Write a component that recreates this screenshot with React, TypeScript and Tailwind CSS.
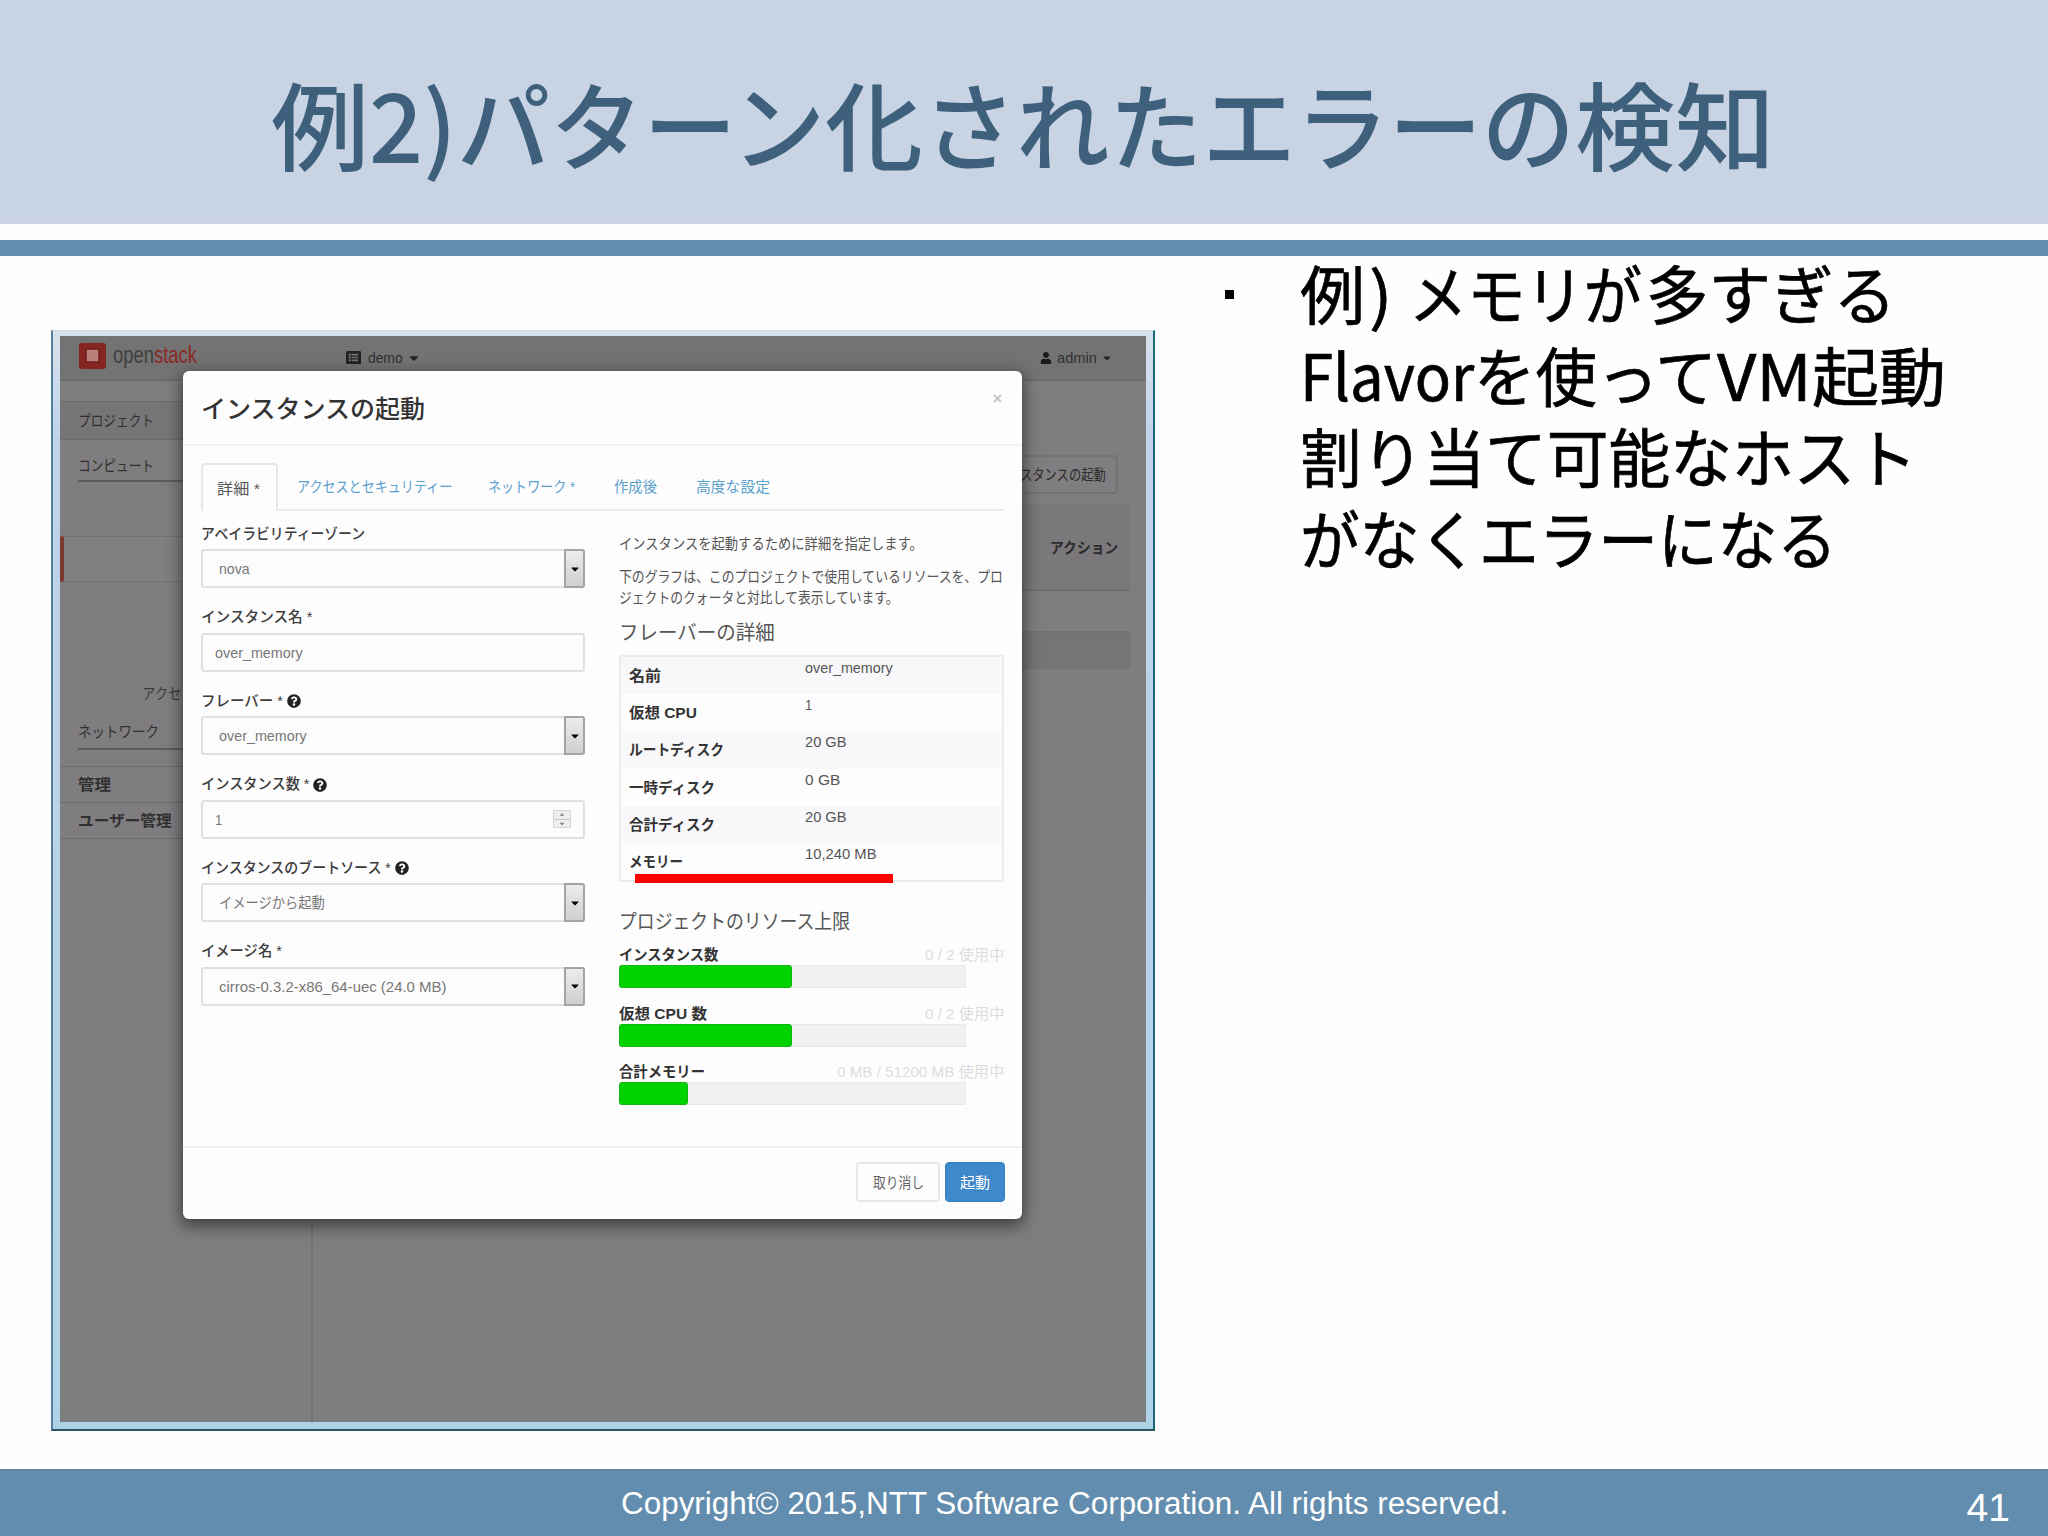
import React, { useLayoutEffect, useRef, useState } from "react";
import { FaCaretDown, FaListAlt, FaQuestionCircle, FaUser } from "react-icons/fa";

type FitProps = {
  w: number;
  className?: string;
  children: React.ReactNode;
};

// Single line of text condensed or stretched to a given width.
function Fit({ w, className = "", children }: FitProps) {
  const ref = useRef<HTMLSpanElement>(null);
  const [scale, setScale] = useState(1);

  useLayoutEffect(() => {
    if (ref.current) setScale(w / ref.current.offsetWidth);
  }, [w]);

  return (
    <span className={`block shrink-0 ${className}`} style={{ width: w }}>
      <span
        ref={ref}
        className="inline-block origin-left whitespace-nowrap"
        style={{ transform: `scaleX(${scale})` }}
      >
        {children}
      </span>
    </span>
  );
}

const fields = [
  { label: "アベイラビリティーゾーン", lw: 164, value: "nova", vw: 31, type: "select" },
  { label: "インスタンス名 *", lw: 111, value: "over_memory", vw: 88, type: "text" },
  { label: "フレーバー *", lw: 82, value: "over_memory", vw: 88, type: "select", help: true },
  { label: "インスタンス数 *", lw: 108, value: "1", vw: 7, type: "number", help: true },
  { label: "インスタンスのブートソース *", lw: 190, value: "イメージから起動", vw: 106, type: "select", help: true },
  { label: "イメージ名 *", lw: 81, value: "cirros-0.3.2-x86_64-uec (24.0 MB)", vw: 227, type: "select" },
];

const flavor = [
  { name: "名前", nw: 32, value: "over_memory", vw: 88 },
  { name: "仮想 CPU", nw: 68, value: "1", vw: 7 },
  { name: "ルートディスク", nw: 95, value: "20 GB", vw: 42 },
  { name: "一時ディスク", nw: 86, value: "0 GB", vw: 35 },
  { name: "合計ディスク", nw: 86, value: "20 GB", vw: 42 },
  { name: "メモリー", nw: 54, value: "10,240 MB", vw: 72 },
];

const quotas = [
  { name: "インスタンス数", nw: 99, used: "0 / 2 使用中", uw: 79, fill: 173 },
  { name: "仮想 CPU 数", nw: 88, used: "0 / 2 使用中", uw: 79, fill: 173 },
  { name: "合計メモリー", nw: 86, used: "0 MB / 51200 MB 使用中", uw: 167, fill: 69 },
];

function Field({ field }: { field: (typeof fields)[number] }) {
  const { label, lw, value, vw, type, help } = field;
  return (
    <div className="h-[83.6px]">
      <div className="flex h-8 items-center gap-1 text-[15px] font-medium text-[#3c3c3c]">
        <Fit w={lw}>{label}</Fit>
        {help && <FaQuestionCircle className="mt-0.5 size-3.5 text-[#222]" />}
      </div>
      <div
        className={`flex h-[39px] items-center justify-between rounded-[3px] border-2 border-[#e0dfe1] bg-[#fdfcfd] text-[15px] text-[#777] ${
          type === "select" ? "pl-4" : "pl-3"
        }`}
      >
        <Fit w={vw}>{value}</Fit>
        {type === "select" && (
          <div className="-my-0.5 -mr-0.5 flex h-[39px] w-[21px] items-center justify-center rounded-r-[3px] border-2 border-[#a5a3a5] bg-linear-to-b from-[#ececec] to-[#cfcfcf]">
            <FaCaretDown className="h-3 w-2.5 text-black" />
          </div>
        )}
        {type === "number" && (
          <div className="mr-3 flex h-[18px] w-[18px] flex-col items-center justify-center border border-[#d5d5d5] bg-[#eee] text-[#888]">
            <FaCaretDown className="size-2 rotate-180" />
            <div className="h-px w-full bg-[#c4c4c4]" />
            <FaCaretDown className="size-2" />
          </div>
        )}
      </div>
    </div>
  );
}

function FlavorPanel() {
  return (
    <div className="w-[385px] pt-[23px] text-[#555]">
      <Fit w={304} className="h-5 text-[15px] leading-5">
        インスタンスを起動するために詳細を指定します。
      </Fit>
      <Fit w={384} className="mt-3 h-[21px] text-[15px] leading-[21px]">
        下のグラフは、このプロジェクトで使用しているリソースを、プロ
      </Fit>
      <Fit w={280} className="h-[21px] text-[15px] leading-[21px]">
        ジェクトのクォータと対比して表示しています。
      </Fit>
      <Fit w={156} className="mt-[11px] h-7 text-xl leading-7">
        フレーバーの詳細
      </Fit>

      <div className="mt-2 h-[227px] border-2 border-[#ececee]">
        {flavor.map((row) => (
          <div key={row.name} className="flex h-[37.2px] pl-2 text-[15px] leading-5 odd:bg-[#f8f8fa]">
            <div className="w-44 pt-[9px] font-bold text-[#333]">
              <Fit w={row.nw}>{row.name}</Fit>
            </div>
            <Fit w={row.vw} className="pt-px">
              {row.value}
            </Fit>
          </div>
        ))}
      </div>

      <Fit w={231} className="mt-[26px] h-7 text-xl leading-7">
        プロジェクトのリソース上限
      </Fit>
      <div className="mt-2">
        {quotas.map((q) => (
          <div key={q.name} className="h-[58.5px]">
            <div className="flex h-[21px] justify-between text-[15px] leading-[21px]">
              <Fit w={q.nw} className="font-bold text-[#333]">
                {q.name}
              </Fit>
              <Fit w={q.uw} className="text-[#dcdcde]">
                {q.used}
              </Fit>
            </div>
            <div className="h-[23px] w-[347px] border border-[#e8e8ea] bg-[#f1f0f2]">
              <div
                className="-mt-px -ml-px h-[23px] rounded-[3px] border border-[#12b512] bg-[#00d200]"
                style={{ width: q.fill }}
              />
            </div>
          </div>
        ))}
      </div>
    </div>
  );
}

function LaunchDialog() {
  return (
    <div className="absolute top-[35px] left-[123px] flex h-[848px] w-[839px] flex-col rounded-md bg-[#fefdfe] shadow-[0_5px_16px_2px_rgba(0,0,0,0.5)]">
      <div className="flex h-[75px] items-start justify-between border-b-2 border-[#f3f1f4] pt-6 pr-5 pl-[18px]">
        <Fit w={224} className="text-[25px] leading-7 font-medium text-[#333]">
          インスタンスの起動
        </Fit>
        <span className="text-base leading-2 font-bold text-[#c4c4c4]">×</span>
      </div>

      <div className="px-[18px] pt-[17px]">
        <div className="flex h-[48px] items-center border-b-2 border-[#ececef] text-[15px] text-[#5ba0cd]">
          <div className="-mb-0.5 flex h-[48px] w-[77px] shrink-0 items-center rounded-t border-2 border-b-0 border-[#e7e6ea] bg-[#fefdfe] pl-3.5 text-[#555]">
            <Fit w={43}>詳細 *</Fit>
          </div>
          <Fit w={155} className="ml-[19px]">アクセスとセキュリティー</Fit>
          <Fit w={87} className="ml-9">ネットワーク *</Fit>
          <Fit w={43} className="ml-[39px]">作成後</Fit>
          <Fit w={74} className="ml-[39px]">高度な設定</Fit>
        </div>

        <div className="flex h-[635px] justify-between">
          <div className="w-[384px] pt-1.5">
            {fields.map((field) => (
              <Field key={field.label} field={field} />
            ))}
          </div>
          <FlavorPanel />
        </div>
      </div>

      <div className="flex h-[73px] justify-end gap-[5px] border-t-2 border-[#f0eef2] pt-3.5 pr-[17px] text-[15px]">
        <button className="flex h-10 w-[84px] items-center justify-center rounded border-2 border-[#e6e5e8] text-[#666]">
          <Fit w={51}>取り消し</Fit>
        </button>
        <button className="flex h-10 w-[60px] items-center justify-center rounded border border-[#357ebd] bg-[#3f88c9] text-white">
          <Fit w={30}>起動</Fit>
        </button>
      </div>
    </div>
  );
}

function Sidebar() {
  return (
    <div className="w-[253px] border-r-2 border-[#737173] text-[15px] text-[#303030]">
      <div className="mt-5 flex h-[39px] items-center border-y border-[#6c6a6c] bg-[#777577] pl-[18px]">
        <Fit w={76}>プロジェクト</Fit>
      </div>
      <div className="ml-[18px] flex h-[42px] items-center border-b-2 border-[#5d5b5d] pt-2.5">
        <Fit w={76}>コンピュート</Fit>
      </div>
      <div className="mt-[54px] h-[46px] border-y border-l-4 border-y-[#747274] border-l-[#7a3a32] bg-[#817f81]" />
      <div className="mt-[102px] h-5 pl-[82px] leading-5 text-[#3c3c3c]">
        <Fit w={39}>アクセ</Fit>
      </div>
      <div className="mt-2.5 ml-[18px] flex h-9 items-center border-b-2 border-[#5d5b5d]">
        <Fit w={81}>ネットワーク</Fit>
      </div>
      <div className="mt-4 flex h-[37px] items-center border-y border-[#6c6a6c] pl-[18px] font-bold">
        <Fit w={33}>管理</Fit>
      </div>
      <div className="flex h-9 items-center border-b border-[#6c6a6c] pl-[18px] font-bold">
        <Fit w={94}>ユーザー管理</Fit>
      </div>
    </div>
  );
}

function Dashboard() {
  return (
    <div className="relative flex h-[1086px] w-[1086px] flex-col bg-[#7f7d7f] leading-none">
      <div className="flex h-[45px] items-center border-b-2 border-[#6c6c6c] bg-[#727372] pr-[33px] pb-1 pl-[19px] text-[#303030]">
        <svg width="27" height="26" viewBox="0 0 27 26">
          <rect width="27" height="26" rx="3" fill="#852522" />
          <rect x="7" y="6" width="13" height="13" fill="#b9807b" stroke="#6f1b19" strokeWidth="1.5" />
        </svg>
        <Fit w={84} className="ml-[7px] text-[23px] text-[#404040]">
          open<span className="text-[#8c2825]">stack</span>
        </Fit>
        <div className="mt-1 ml-[149px] flex items-center text-[15px]">
          <FaListAlt className="size-[15px] text-[#222]" />
          <Fit w={35} className="ml-[7px]">demo</Fit>
          <FaCaretDown className="ml-1 size-3.5 text-[#222]" />
        </div>
        <div className="mt-1 ml-auto flex items-center text-[15px]">
          <FaUser className="size-3 text-[#1b1b1b]" />
          <Fit w={40} className="ml-[5px]">admin</Fit>
          <FaCaretDown className="ml-1 size-3 text-[#222]" />
        </div>
      </div>

      <div className="flex flex-1">
        <Sidebar />
        <div className="flex flex-1 flex-col items-end pr-4 text-[15px] text-[#2b2b2b]">
          <div className="mt-[74px] mr-3 flex h-[39px] w-[150px] items-center justify-end rounded border-2 border-[#747274] pr-2.5">
            <Fit w={86}>スタンスの起動</Fit>
          </div>
          <div className="mt-2.5 flex h-[87px] w-full items-center justify-end border-b-2 border-[#6f6d6f] bg-[#7a787a] pt-0.5 pr-3 font-bold">
            <Fit w={68}>アクション</Fit>
          </div>
          <div className="h-[42px] w-full border-b-2 border-[#737173]" />
          <div className="h-9 w-full bg-[#767476]" />
        </div>
      </div>

      <LaunchDialog />
      <div className="absolute top-[538px] left-[575px] h-[9px] w-[258px] bg-[#ff0000]" />
    </div>
  );
}

function App() {
  return (
    <div className="flex h-[1536px] w-[2048px] flex-col overflow-hidden bg-[#fefefe] font-['Liberation_Sans','Noto_Sans_CJK_JP',sans-serif]">
      <header className="flex h-56 items-center border-b-2 border-[#ccd1de] bg-[#c8d4e3] pt-[21px] pl-[271px] font-['Noto_Sans_CJK_JP',sans-serif] text-[96px] leading-none font-medium text-[#3f607c]">
        <Fit w={98}>例</Fit>
        <Fit w={88}>2)</Fit>
        <Fit w={368}>パターン</Fit>
        <Fit w={98}>化</Fit>
        <Fit w={652}>されたエラーの</Fit>
        <Fit w={200}>検知</Fit>
      </header>
      <div className="mt-4 h-4 shrink-0 border-y border-[#6c8ba0] bg-[#628dae]" />

      <main className="flex flex-1">
        <div className="mt-[74px] ml-[51px] h-[1101px] w-[1104px] shrink-0 border-2 border-t border-t-[#cfdbe6] border-r-[#1d6578] border-b-[#2f5365] border-l-[#547f9c] bg-linear-to-b from-[#d7e2ec] via-[#c0d3ea] via-10% to-[#aed3e8] pt-[5px] pl-[7px]">
          <Dashboard />
        </div>
        <div className="ml-[70px] flex font-['Noto_Sans_CJK_JP',sans-serif] text-[64px] leading-[81.7px] text-black [-webkit-text-stroke:0.7px_black]">
          <div className="mt-[34px] mr-[66px] size-[9px] bg-black" />
          <div className="-mt-[5px]">
            <div className="flex">
              <Fit w={65}>例</Fit>
              <Fit w={24} className="ml-1">)</Fit>
              <Fit w={233} className="ml-4">メモリが</Fit>
              <Fit w={250} className="ml-1">多すぎる</Fit>
            </div>
            <div className="flex">
              <Fit w={174}>Flavor</Fit>
              <Fit w={243}>を使って</Fit>
              <Fit w={95}>VM</Fit>
              <Fit w={134}>起動</Fit>
            </div>
            <Fit w={617}>割り当て可能なホスト</Fit>
            <Fit w={537}>がなくエラーになる</Fit>
          </div>
        </div>
      </main>

      <footer className="flex h-[67px] shrink-0 items-center border-t-2 border-[#5c88a6] bg-[#628dae] pr-[38px] pl-[621px] leading-none text-white">
        <Fit w={887} className="text-[31px]">
          Copyright© 2015,NTT Software Corporation. All rights reserved.
        </Fit>
        <span className="mt-2 ml-auto text-[39px]">41</span>
      </footer>
    </div>
  );
}

export default App;
